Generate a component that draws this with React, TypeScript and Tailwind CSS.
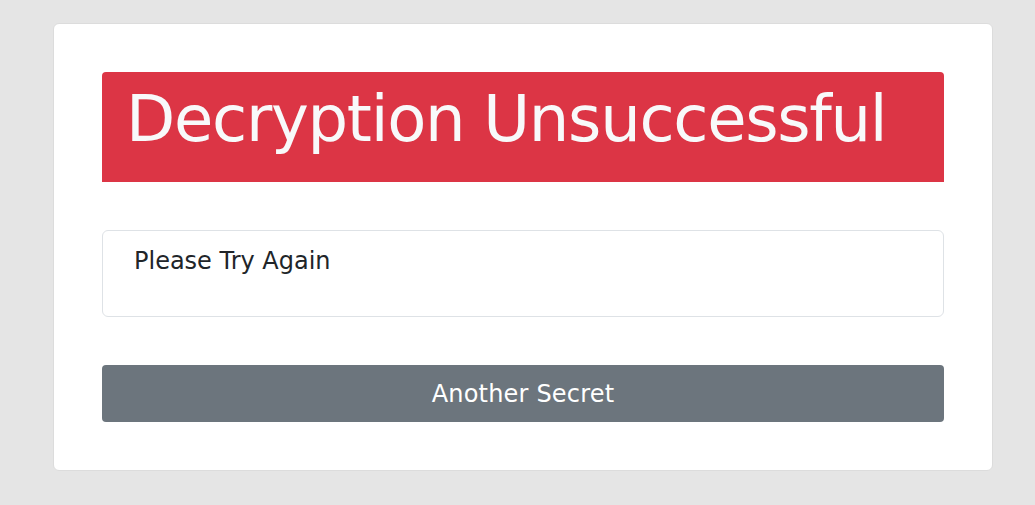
export default function App() {
  return (
    <div className="min-h-screen bg-[#e5e5e5] pt-[23px] pl-[53px] font-['DejaVu_Sans',sans-serif]">
      <div className="w-[940px] rounded-md border border-[#dcdcdc] bg-white p-12">
        {/* Result banner */}
        <div className="h-[110px] rounded-t bg-[#dc3545] pl-6 pt-[9px]">
          <h1 className="text-[64px] leading-[77px] tracking-[-1.3px] text-[#f8f9fa]">Decryption Unsuccessful</h1>
        </div>

        {/* Message */}
        <div className="mt-12 h-[87px] rounded-md border border-[#dee2e6] pl-[31px] pt-3">
          <p className="text-2xl leading-9 text-[#212529]">Please Try Again</p>
        </div>

        {/* Action */}
        <button className="mt-12 flex h-[57px] w-full items-center justify-center rounded bg-[#6c757d] text-2xl tracking-[0.2px] text-white">
          Another Secret
        </button>
      </div>
    </div>
  );
}
